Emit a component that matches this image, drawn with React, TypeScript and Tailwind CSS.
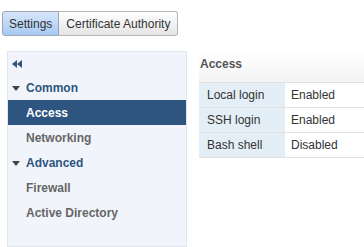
import React from 'react'

const NAV = [
  { label: 'Common', group: true },
  { label: 'Access', selected: true },
  { label: 'Networking' },
  { label: 'Advanced', group: true },
  { label: 'Firewall' },
  { label: 'Active Directory' },
]

const ROWS = [
  ['Local login', 'Enabled'],
  ['SSH login', 'Enabled'],
  ['Bash shell', 'Disabled'],
]

export default function App() {
  return (
    <div
      className="w-[364px] h-[247px] bg-white overflow-hidden text-[12px] text-[#333]"
      style={{ fontFamily: '"Liberation Sans", Arial, sans-serif' }}
    >
      {/* tab switcher */}
      <div className="pt-[11px] pl-[2px] flex">
        <div className="h-[25px] flex items-center px-[6px] border border-[#9aa5b3] rounded-l-[3px] bg-gradient-to-b from-[#d6e6fa] to-[#a9c9f2]">
          Settings
        </div>
        <div className="h-[25px] flex items-center px-[7px] border border-l-0 border-[#b5b5b5] rounded-r-[3px] bg-gradient-to-b from-white to-[#e4e4e4]">
          Certificate Authority
        </div>
      </div>

      <div className="flex mt-[15px]">
        {/* left nav */}
        <div className="ml-[7px] w-[180px] h-[196px] bg-[#f1f5fb] border border-[#e1e6ee]">
          <div className="h-[23px] flex items-center pl-[4px]">
            <svg width="10" height="8" viewBox="0 0 10 8">
              <path d="M5 0 L0 4 L5 8 Z M10 0 L5 4 L10 8 Z" fill="#2d5580" />
            </svg>
          </div>
          {NAV.map((n) => (
            <div
              key={n.label}
              className={`h-[25px] flex items-center font-bold ${
                n.selected ? 'bg-[#2d5580] text-white' : n.group ? 'text-[#2d5580]' : 'text-[#666]'
              } ${n.group ? 'pl-[4px]' : 'pl-[18px]'}`}
            >
              {n.group && (
                <svg width="8" height="5" viewBox="0 0 8 5" className="mr-[6px] mt-[2px]">
                  <path d="M0 0 L8 0 L4 5 Z" fill="#444" />
                </svg>
              )}
              {n.label}
            </div>
          ))}
        </div>

        {/* right content */}
        <div className="ml-[12px] flex-1">
          <div className="h-[31px] pt-[4px] pl-[1px] font-bold text-[#555] bg-gradient-to-b from-white to-[#f3f3f3]">
            Access
          </div>
          <div className="border-t border-[#e0e0e0]">
            {ROWS.map(([k, v]) => (
              <div key={k} className="h-[25px] flex border-b border-[#e0e0e0]">
                <div className="w-[86px] bg-[#e4eef6] flex items-center pl-[8px]">{k}</div>
                <div className="flex-1 flex items-center pl-[6px]">{v}</div>
              </div>
            ))}
          </div>
        </div>
      </div>
    </div>
  )
}
